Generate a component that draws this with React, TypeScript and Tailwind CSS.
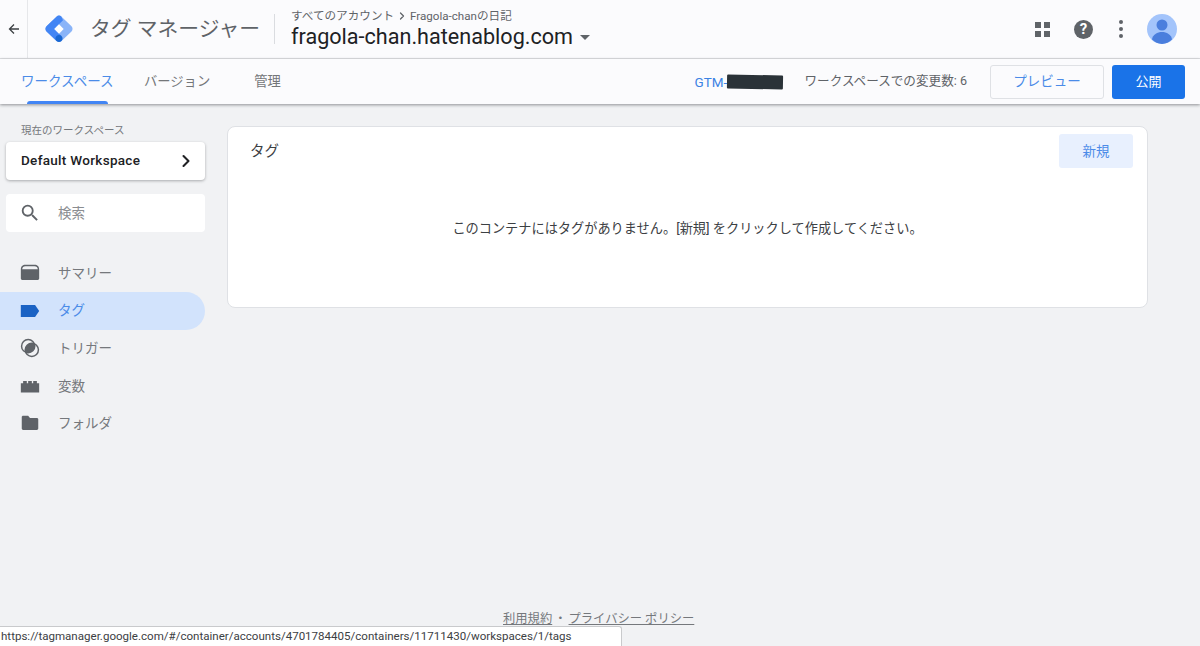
import { ChevronRight } from 'lucide-react';

const FONT = { fontFamily: 'Roboto, "Noto Sans CJK JP", sans-serif' };

const NAV_ITEMS = [
  {
    label: 'サマリー',
    icon: <path d="M2 8.5C2 4.5 4 3 7 3h10c3 0 5 1.500 5 5.500V18c0 .8-.7 1.500-1.500 1.500h-17C2.700 19.500 2 18.800 2 18V8.500zM3.500 8h17c-.2-2.300-1.300-3.500-3.500-3.500H7C4.800 4.500 3.700 5.700 3.500 8z" fillRule="evenodd" />,
  },
  {
    label: 'タグ',
    active: true,
    icon: <path d="M2 5.500h15.500L22 12l-4.500 6.500H2z" />,
  },
  {
    label: 'トリガー',
    icon: (
      <>
        <circle cx="10" cy="10" r="7.200" fill="none" stroke="currentColor" strokeWidth="1.600" />
        <circle cx="14" cy="14" r="7.200" fill="none" stroke="currentColor" strokeWidth="1.600" />
        <path d="M16.680 7.320A7.200 7.200 0 0 1 7.320 16.680 7.200 7.200 0 0 1 16.680 7.320z" />
      </>
    ),
  },
  {
    label: '変数',
    icon: <path d="M2 9h2.500V6.500h4V9h1.500V6.500h4V9h1.500V6.500h4V9H22v10H2z" />,
  },
  {
    label: 'フォルダ',
    icon: <path d="M3 5.500C3 4.700 3.700 4 4.500 4H10l2 2.500h7.500c.8 0 1.500.7 1.500 1.500v10c0 .8-.7 1.500-1.500 1.500h-15C3.700 19.500 3 18.800 3 18z" />,
  },
];

function Logo() {
  return (
    <svg width="30" height="30" viewBox="0 0 30 30">
      <path d="M15 1.500c.9 0 1.700.3 2.300 1l10.200 9.800c1.400 1.400 1.400 3.800 0 5.200L17.500 27c-1.400 1.400-3.600 1.400-5 0L2.500 17.500c-1.400-1.400-1.400-3.800 0-5.200L12.700 2.500c.6-.7 1.400-1 2.300-1z" fill="#8ab4f8" />
      <path d="M12.700 2.500 2.500 12.300c-1.400 1.400-1.400 3.800 0 5.200L12.500 27l5-5-7.400-7L19 6.300l-1.700-3.800c-1.300-1.300-3.400-1.300-4.600 0z" fill="#4285f4" />
      <path d="M12.500 27c1.400 1.400 3.600 1.400 5 0 1.400-1.400 1.400-3.600 0-5s-3.600-1.400-5 0-1.400 3.600 0 5z" fill="#1967d2" />
      <path d="m15 10.300 4.700 4.700-4.700 4.700-4.700-4.700z" fill="#fff" />
    </svg>
  );
}

export default function App() {
  return (
    <div className="relative flex h-[646px] w-[1200px] flex-col overflow-hidden bg-[#f1f2f4]" style={FONT}>
      <header className="flex h-[59px] shrink-0 items-center border-b border-[#e0e1e4] bg-[#fbfbfd]">
        <div className="flex h-full w-[28px] shrink-0 items-center justify-center border-r border-[#e6e7ea]">
          <svg width="12" height="12" viewBox="0 0 12 12" fill="none" stroke="#3c4043" strokeWidth="1.300">
            <path d="M11 6H1.500M6 1.500 1.500 6 6 10.500" />
          </svg>
        </div>
        <div className="ml-[16px] flex items-center">
          <Logo />
        </div>
        <span className="mt-[2px] ml-[16px] w-[169px] text-[20.800px] whitespace-nowrap text-[#5f6368]">タグ マネージャー</span>
        <div className="ml-[15px] h-[30px] w-px bg-[#dadce0]" />
        <div className="ml-[16px] flex flex-col">
          <div className="flex items-center text-[11.600px] leading-[14px] whitespace-nowrap text-[#5f6368]">
            <span>すべてのアカウント</span>
            <ChevronRight className="mx-[2px] h-3 w-3" strokeWidth={2.500} />
            <span>Fragola-chanの日記</span>
          </div>
          <div className="flex items-center text-[21.600px] leading-[27px] whitespace-nowrap text-[#202124]">
            fragola-chan.hatenablog.com
            <span className="mt-[2px] ml-[7px] h-0 w-0 border-x-[5px] border-t-[5px] border-x-transparent border-t-[#5f6368]" />
          </div>
        </div>
        <div className="mr-[23px] ml-auto flex items-center">
          <div className="grid grid-cols-2 gap-[3px]">
            <span className="h-[6px] w-[6px] bg-[#5f6368]" />
            <span className="h-[6px] w-[6px] bg-[#5f6368]" />
            <span className="h-[6px] w-[6px] bg-[#5f6368]" />
            <span className="h-[6px] w-[6px] bg-[#5f6368]" />
          </div>
          <div className="ml-[24px] flex h-[19px] w-[19px] items-center justify-center rounded-full bg-[#5f6368] text-[15px] leading-none font-bold text-white">?</div>
          <div className="ml-[26px] flex flex-col gap-[3px]">
            <span className="h-[4px] w-[4px] rounded-full bg-[#5f6368]" />
            <span className="h-[4px] w-[4px] rounded-full bg-[#5f6368]" />
            <span className="h-[4px] w-[4px] rounded-full bg-[#5f6368]" />
          </div>
          <svg className="ml-[24px]" width="30" height="30" viewBox="0 0 30 30">
            <circle cx="15" cy="15" r="15" fill="#a3c4fb" />
            <circle cx="15" cy="11" r="5.500" fill="#4a7edd" />
            <path d="M5 25.500c.5-5 5.500-7.500 10-7.500s9.500 2.500 10 7.500A15 15 0 0 1 15 30a15 15 0 0 1-10-4.500z" fill="#4a7edd" />
          </svg>
        </div>
      </header>

      <div className="z-10 flex h-[45px] shrink-0 items-center bg-[#fbfbfd] shadow-[0_1px_3px_rgba(60,64,67,0.55)]">
        <div className="relative ml-[21px] flex h-full w-[93px] items-center text-[13.500px] whitespace-nowrap text-[#4b8be8]">
          ワークスペース
          <span className="absolute bottom-0 left-[6px] h-[3px] w-[81px] rounded-t-[3px] bg-[#4285f4]" />
        </div>
        <span className="ml-[30px] text-[13.300px] whitespace-nowrap text-[#747679]">バージョン</span>
        <span className="ml-[44px] text-[13.300px] whitespace-nowrap text-[#747679]">管理</span>
        <div className="ml-auto flex items-center">
          <div className="relative mt-[2px] flex w-[88px] items-center text-[13.500px] text-[#3b82e4]">
            GTM-
            <span className="absolute top-[3px] left-[32px] h-[14px] w-[56px] rotate-[1deg] rounded-[1px] bg-[#2a3238]" />
          </div>
          <span className="ml-[22px] text-[12.600px] whitespace-nowrap text-[#5f6368]">ワークスペースでの変更数: 6</span>
          <button className="ml-[23px] h-[34px] w-[114px] rounded-[3px] border border-[#dfe1e5] text-[13.500px] text-[#4b8be8]">プレビュー</button>
          <button className="mr-[15px] ml-[8px] h-[34px] w-[73px] rounded-[3px] bg-[#1a73e8] text-[13px] text-white">公開</button>
        </div>
      </div>

      <div className="flex min-h-0 flex-1">
        <aside className="w-[227px] shrink-0">
          <p className="mt-[20px] ml-[21px] text-[10.500px] leading-[13px] text-[#75787c]">現在のワークスペース</p>
          <div className="mt-[5px] ml-[6px] flex h-[38px] w-[199px] items-center justify-between rounded-[4px] bg-white pr-[9px] pb-[1px] pl-[15px] text-[13.500px] font-medium tracking-[0.3px] text-[#202124] shadow-[0_1px_3px_rgba(60,64,67,0.4)]">
            Default Workspace
            <ChevronRight className="h-5 w-5" strokeWidth={2.500} />
          </div>
          <div className="mt-[14px] ml-[6px] flex h-[38px] w-[199px] items-center rounded-[4px] bg-white pl-[13px] text-[13.500px] text-[#8a8d91]">
            <svg width="22" height="22" viewBox="0 0 24 24" fill="#5f6368">
              <path d="M15.500 14h-.79l-.28-.27A6.470 6.470 0 0 0 16 9.500 6.500 6.500 0 1 0 9.500 16c1.610 0 3.090-.59 4.230-1.570l.27.28v.79l5 4.990L20.490 19l-4.990-5zm-6 0C7.010 14 5 11.990 5 9.500S7.010 5 9.500 5 14 7.010 14 9.500 11.990 14 9.500 14z" />
            </svg>
            <span className="ml-[17px]">検索</span>
          </div>
          <nav className="mt-[22px] flex flex-col">
            {NAV_ITEMS.map((item) => (
              <div
                key={item.label}
                className={item.active
                  ? 'flex h-[38px] w-[205px] items-center rounded-r-[19px] bg-[#d2e3fc] pl-[19px] text-[#1a62c4]'
                  : 'flex h-[37.500px] w-[205px] items-center pl-[19px] text-[#5f6368]'}
              >
                <svg width="22" height="22" viewBox="0 0 24 24" fill="currentColor">{item.icon}</svg>
                <span className={item.active ? 'ml-[17px] text-[13.500px] text-[#4b8be8]' : 'ml-[17px] text-[13.500px] text-[#75787c]'}>{item.label}</span>
              </div>
            ))}
          </nav>
        </aside>

        <main className="flex min-w-0 flex-1 flex-col">
          <section className="mt-[22px] h-[182px] w-[921px] rounded-[8px] border border-[#dfe1e5] bg-white">
            <div className="flex items-start justify-between">
              <h2 className="mt-[14px] ml-[22px] text-[14.500px] font-normal text-[#3c4043]">タグ</h2>
              <button className="mt-[7px] mr-[14px] h-[34px] w-[74px] rounded-[3px] bg-[#e8f0fe] text-[13.500px] text-[#4b8be8]">新規</button>
            </div>
            <p className="mt-[51px] text-center text-[13.200px] text-[#3c4043]">このコンテナにはタグがありません。[新規] をクリックして作成してください。</p>
          </section>
          <footer className="mt-auto mb-[18px] ml-[276px] flex items-center text-[12.300px] text-[#75787c]">
            <span className="underline">利用規約</span>
            <span className="mx-[2px]">・</span>
            <span className="underline">プライバシー ポリシー</span>
          </footer>
        </main>
      </div>

      {/* browser status bubble sits over the page */}
      <div className="absolute bottom-0 left-0 flex h-[20px] w-[622px] items-center rounded-tr-[3px] border-t border-r border-[#c9cacc] bg-white pl-px text-[11.550px] whitespace-nowrap text-[#3c4043]">
        https://tagmanager.google.com/#/container/accounts/4701784405/containers/11711430/workspaces/1/tags
      </div>
    </div>
  );
}
